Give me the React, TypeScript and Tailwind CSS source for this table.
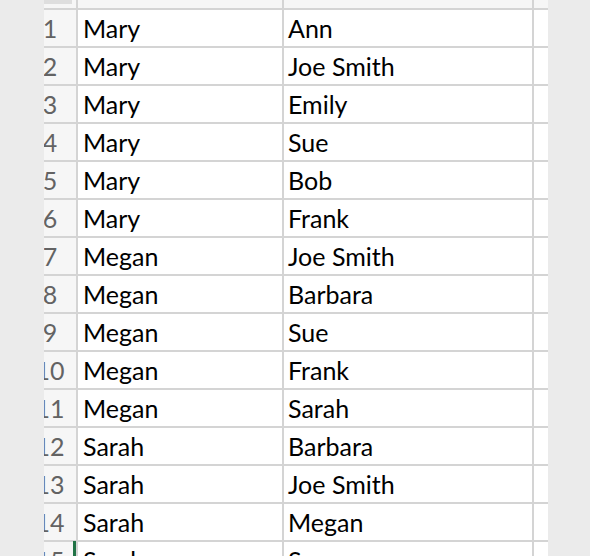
const ROWS: [string, string][] = [
  ['Mary', 'Ann'],
  ['Mary', 'Joe Smith'],
  ['Mary', 'Emily'],
  ['Mary', 'Sue'],
  ['Mary', 'Bob'],
  ['Mary', 'Frank'],
  ['Megan', 'Joe Smith'],
  ['Megan', 'Barbara'],
  ['Megan', 'Sue'],
  ['Megan', 'Frank'],
  ['Megan', 'Sarah'],
  ['Sarah', 'Barbara'],
  ['Sarah', 'Joe Smith'],
  ['Sarah', 'Megan'],
  ['Sarah', 'Sue'],
];

export default function App() {
  return (
    <div className="w-[590px] h-[556px] overflow-hidden bg-[#ebebeb] flex font-['Lato',sans-serif]">
      {/* left margin */}
      <div className="w-[44px] shrink-0" />

      {/* sheet */}
      <div className="relative w-[504px] shrink-0 bg-white">
        {/* column headers */}
        <div className="flex h-[10px] bg-[#f6f6f6]">
          <div className="w-[34px] h-[10px] border-r-2 border-b-2 border-[#d4d4d4]">
            <div className="w-[28px] h-[4px] bg-[#dedede]" />
          </div>
          <div className="w-[206px] h-[10px] border-r-2 border-b-2 border-[#d4d4d4]" />
          <div className="w-[250px] h-[10px] border-r-2 border-b-2 border-[#d4d4d4]" />
          <div className="w-[14px] h-[10px] border-b-2 border-[#d4d4d4]" />
        </div>

        {ROWS.map(([a, b], i) => (
          <div key={i} className="flex h-[38px]">
            <div className="w-[34px] h-[38px] overflow-hidden bg-[#f6f6f6] border-r-2 border-b-2 border-[#d4d4d4]">
              <div className="w-[52px] -ml-[20px] text-center text-[25px] leading-[37px] text-[#636363]">
                {i + 1}
              </div>
            </div>
            <div className="w-[206px] h-[38px] pl-[5px] border-r-2 border-b-2 border-[#d4d4d4] text-[25px] leading-[37px] text-black whitespace-nowrap">
              {a}
            </div>
            <div className="w-[250px] h-[38px] pl-[4px] border-r-2 border-b-2 border-[#d4d4d4] text-[25px] leading-[37px] text-black whitespace-nowrap">
              {b}
            </div>
            <div className="w-[14px] h-[38px] border-b-2 border-[#d4d4d4]" />
          </div>
        ))}

        {/* active cell marker */}
        <div className="absolute left-[29px] top-[541px] w-[3px] h-[20px] bg-[#217346]" />
      </div>
    </div>
  );
}
